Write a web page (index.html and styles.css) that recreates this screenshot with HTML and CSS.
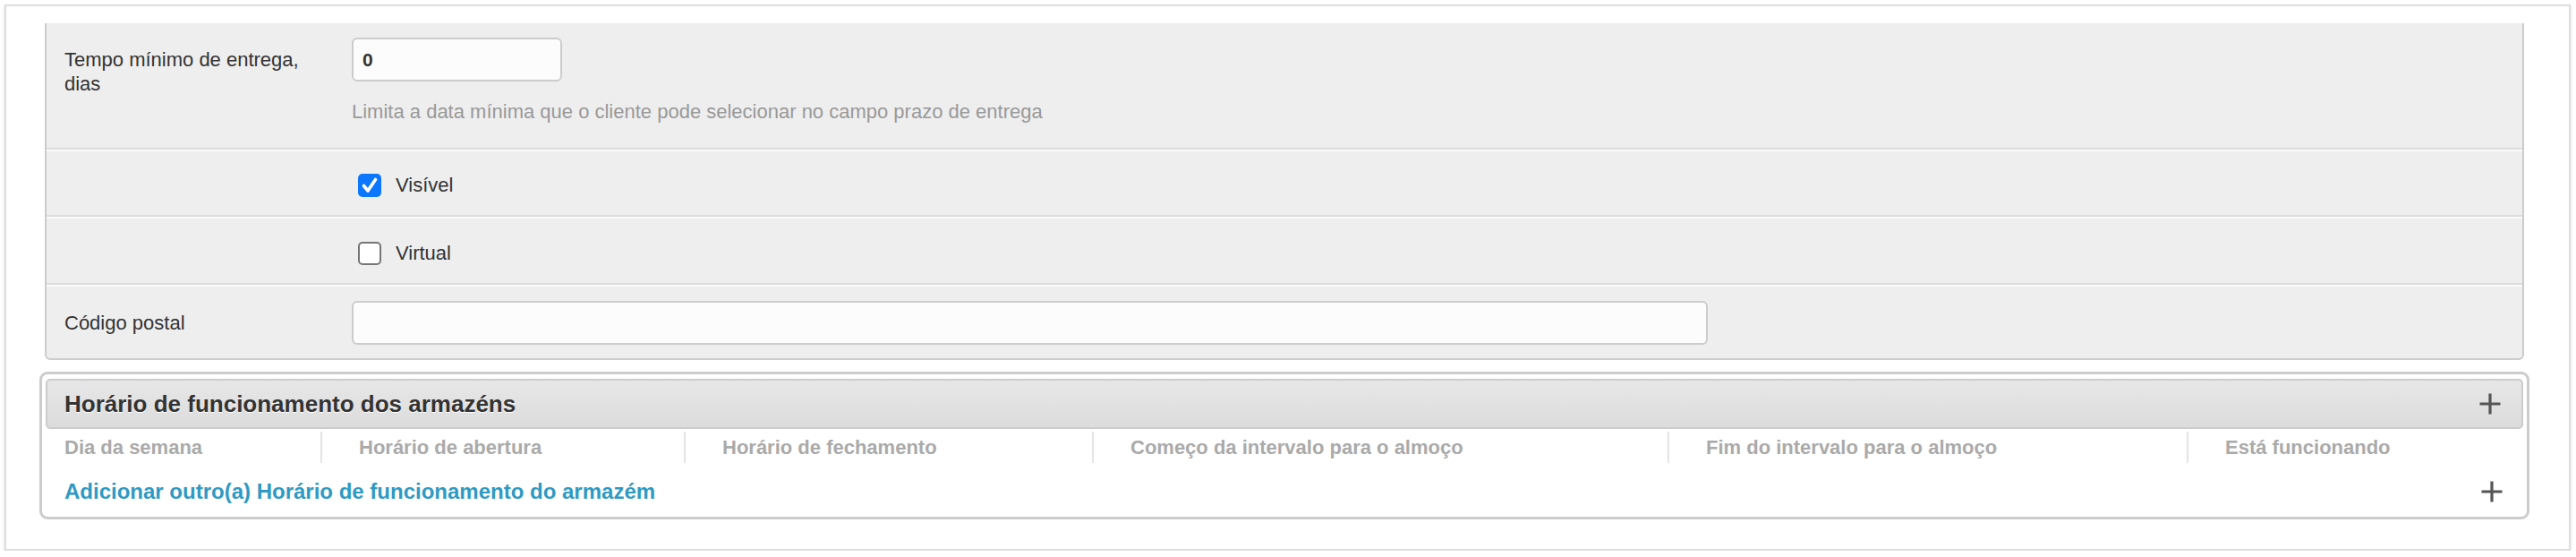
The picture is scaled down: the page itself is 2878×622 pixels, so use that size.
FILE: index.html
```html
<!DOCTYPE html>
<html lang="pt">
<head>
<meta charset="utf-8">
<title>Armazém</title>
<link rel="stylesheet" href="styles.css">
</head>
<body>
<div class="panel">
  <div class="module">
    <div class="row row-first">
      <label class="lbl">Tempo mínimo de entrega, dias</label>
      <div class="field">
        <input class="input input-sm" type="text" value="0">
        <p class="help">Limita a data mínima que o cliente pode selecionar no campo prazo de entrega</p>
      </div>
    </div>
    <div class="row row-check">
      <span class="lbl"></span>
      <div class="field check">
        <span class="cb cb-on"><svg viewBox="0 0 26 26" width="26" height="26"><polyline points="6.5,13.5 11,19 19.5,6.5" fill="none" stroke="#fff" stroke-width="3.6" stroke-linecap="round" stroke-linejoin="round"/></svg></span>
        <span class="cb-text">Visível</span>
      </div>
    </div>
    <div class="row row-check row-check2">
      <span class="lbl"></span>
      <div class="field check">
        <span class="cb cb-off"></span>
        <span class="cb-text">Virtual</span>
      </div>
    </div>
    <div class="row row-last">
      <label class="lbl">Código postal</label>
      <div class="field">
        <input class="input input-lg" type="text" value="">
      </div>
    </div>
  </div>

  <div class="inline">
    <div class="inline-head">
      <h2 class="inline-title">Horário de funcionamento dos armazéns</h2>
      <svg class="plus" viewBox="0 0 26 26" width="26" height="26"><path d="M13 1.5V24.5M1.5 13H24.5" stroke="#555" stroke-width="3.2" fill="none"/></svg>
    </div>
    <div class="cols">
      <div class="col col-first">Dia da semana</div>
      <div class="col">Horário de abertura</div>
      <div class="col">Horário de fechamento</div>
      <div class="col">Começo da intervalo para o almoço</div>
      <div class="col">Fim do intervalo para o almoço</div>
      <div class="col">Está funcionando</div>
    </div>
    <div class="add-row">
      <a class="add-link" href="#">Adicionar outro(a) Horário de funcionamento do armazém</a>
      <svg class="plus" viewBox="0 0 26 26" width="26" height="26"><path d="M13 1.5V24.5M1.5 13H24.5" stroke="#555" stroke-width="3.2" fill="none"/></svg>
    </div>
  </div>
</div>
</body>
</html>
```

FILE: styles.css
```css
html, body {
  margin: 0;
  padding: 0;
  background: #fff;
}

body {
  font-family: "Liberation Sans", Arial, Helvetica, sans-serif;
  color: #333;
}

.panel {
  margin: 5px 6px 0 5px;
  border: 2px solid #dedede;
  box-shadow: 0 1px 3px rgba(0, 0, 0, 0.14);
  background: #fff;
  padding: 19px 44px 33px 37px;
}

.module {
  margin: 0 6px;
  background: #eeeeee;
  border: 2px solid #cccccc;
  border-top: 0;
  border-radius: 0 0 6px 6px;
}

.row {
  display: flex;
  align-items: flex-start;
  padding: 16px 22px 16px 20px;
  border-top: 2px solid #fbfbfb;
  border-bottom: 2px solid #dcdcdc;
}

.row-first {
  border-top: 0;
  padding-bottom: 27px;
}

.row-last {
  border-bottom: 0;
  padding-bottom: 15px;
}

.row-check {
  padding-top: 25px;
  padding-bottom: 20px;
}

.row-check2 {
  padding-top: 26px;
}

.lbl {
  flex: 0 0 280px;
  margin-right: 41px;
  padding-top: 11px;
  font-size: 22px;
  line-height: 27px;
  color: #333;
}

.row-check .lbl {
  padding-top: 0;
}

.field {
  flex: 1 1 auto;
}

.input {
  display: block;
  box-sizing: border-box;
  height: 49px;
  margin: 0;
  padding: 0 10px;
  border: 2px solid #cccccc;
  border-radius: 6px;
  background: #fcfcfc;
  font-family: "Liberation Sans", Arial, sans-serif;
  font-size: 21px;
  font-weight: bold;
  color: #333;
  outline: none;
}

.input-sm {
  width: 235px;
}

.input-lg {
  width: 1515px;
}

.help {
  margin: 20px 0 0;
  font-size: 22px;
  line-height: 27px;
  color: #999;
}

.check {
  display: flex;
  align-items: center;
  padding-left: 7px;
}

.cb {
  box-sizing: border-box;
  display: block;
  width: 26px;
  height: 26px;
  border-radius: 5px;
  margin-right: 16px;
}

.cb svg {
  display: block;
}

.cb-on {
  background: #0b76fe;
}

.cb-off {
  background: #fff;
  border: 2px solid #767676;
}

.cb-text {
  font-size: 22px;
  line-height: 26px;
  color: #333;
}

.inline {
  margin-top: 13px;
  border: 3px solid #cccccc;
  border-radius: 9px;
  padding: 5px 4px 0;
}

.inline-head {
  display: flex;
  align-items: center;
  justify-content: space-between;
  height: 56px;
  box-sizing: border-box;
  border: 2px solid #cccccc;
  border-radius: 5px;
  background: linear-gradient(to bottom, #e7e7e7, #dcdcdc);
  padding: 0 22px 0 19px;
}

.inline-title {
  margin: 0;
  font-size: 26px;
  line-height: 52px;
  font-weight: bold;
  color: #333;
  text-shadow: 0 1px 0 #fff;
}

.plus {
  display: block;
  flex: 0 0 auto;
}

.cols {
  display: grid;
  grid-template-columns: 307px 406px 456px 643px 580px 1fr;
  padding: 3px 0;
}

.col {
  border-left: 2px solid #e4e4e4;
  padding-left: 41px;
  font-size: 22px;
  line-height: 35px;
  font-weight: bold;
  color: #aaaaaa;
  white-space: nowrap;
}

.col-first {
  border-left: 0;
  padding-left: 21px;
}

.add-row {
  display: flex;
  align-items: center;
  justify-content: space-between;
  height: 57px;
  padding: 0 22px 0 21px;
}

.add-link {
  font-size: 24px;
  font-weight: bold;
  color: #2e9ac4;
  text-decoration: none;
}
```
